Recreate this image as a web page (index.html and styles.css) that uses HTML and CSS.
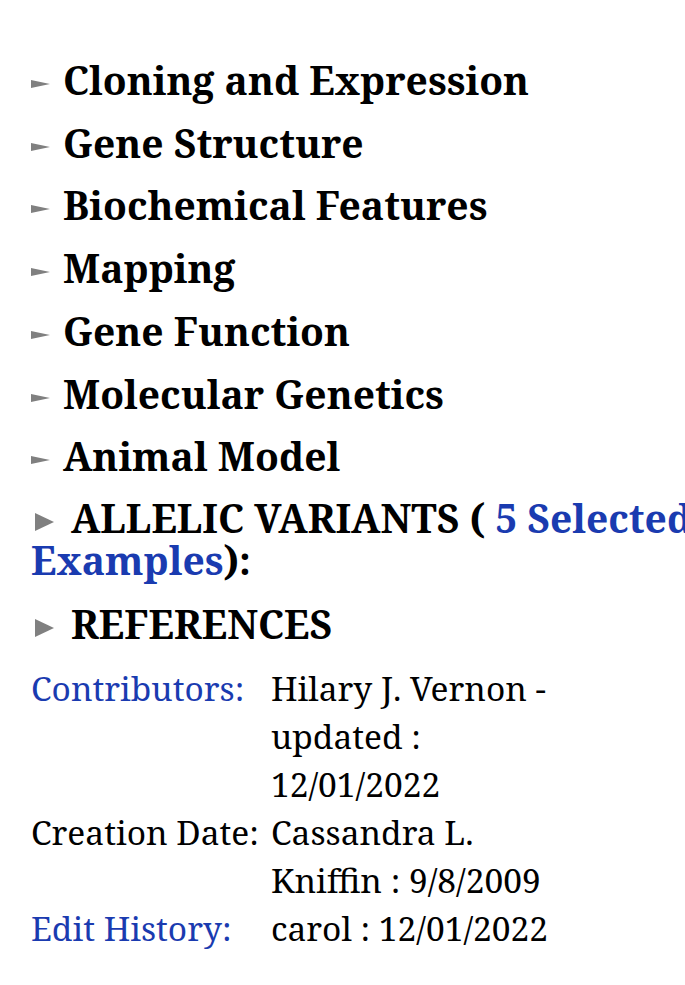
FILE: index.html
```html
<!DOCTYPE html>
<html lang="en">
<head>
  <meta charset="UTF-8">
  <meta name="viewport" content="width=device-width, initial-scale=1.0">
  <title>OMIM Entry</title>
  <link rel="stylesheet" href="styles.css">
</head>
<body>
  <div class="entry">
    <ul class="sections">
      <li><span class="arrow"></span>Cloning and Expression</li>
      <li><span class="arrow"></span>Gene Structure</li>
      <li><span class="arrow"></span>Biochemical Features</li>
      <li><span class="arrow"></span>Mapping</li>
      <li><span class="arrow"></span>Gene Function</li>
      <li><span class="arrow"></span>Molecular Genetics</li>
      <li><span class="arrow"></span>Animal Model</li>
    </ul>

    <h3 class="big-heading allelic"><span class="arrow big"></span>ALLELIC VARIANTS ( <a href="#">5 Selected Examples</a>):</h3>
    <h3 class="big-heading refs"><span class="arrow big"></span>REFERENCES</h3>

    <table class="credits">
      <tr>
        <td class="label"><a href="#">Contributors:</a></td>
        <td class="value">Hilary J. Vernon - updated : 12/01/2022</td>
      </tr>
      <tr>
        <td class="label">Creation Date:</td>
        <td class="value">Cassandra L. Kniffin : 9/8/2009</td>
      </tr>
      <tr>
        <td class="label"><a href="#">Edit History:</a></td>
        <td class="value">carol : 12/01/2022</td>
      </tr>
    </table>
  </div>
</body>
</html>
```

FILE: styles.css
```css
* {
  margin: 0;
  padding: 0;
  box-sizing: border-box;
}

body {
  font-family: 'Noto Serif', 'DejaVu Serif', serif;
  color: #000;
  background: #fff;
}

.entry {
  padding: 49px 0 0 31px;
}

a {
  color: #1a3bb0;
  text-decoration: none;
}

.sections {
  list-style: none;
}

.sections li {
  font-size: 39px;
  font-weight: bold;
  line-height: 62.7px;
}

/* gray right-pointing triangle before each heading */
.arrow {
  display: inline-block;
  width: 0;
  height: 0;
  border-left: 19px solid #808080;
  border-top: 4px solid transparent;
  border-bottom: 4px solid transparent;
  margin: 0 13px 0 0;
  vertical-align: 7px;
}

.arrow.big {
  border-top-width: 9px;
  border-bottom-width: 9px;
  margin: 0 17px 0 4px;
  vertical-align: 2px;
}

.big-heading {
  font-size: 39px;
  font-weight: bold;
  line-height: 42px;
  margin-right: -20px;
}

.allelic {
  margin-top: 9px;
}

.refs {
  margin-top: 22px;
}

.credits {
  border-collapse: collapse;
  margin-top: 19px;
  font-size: 33.5px;
  line-height: 48px;
}

.credits td {
  vertical-align: top;
  padding: 0;
}

.credits .label {
  width: 240px;
}

.credits .value {
  width: 295px;
}
```
